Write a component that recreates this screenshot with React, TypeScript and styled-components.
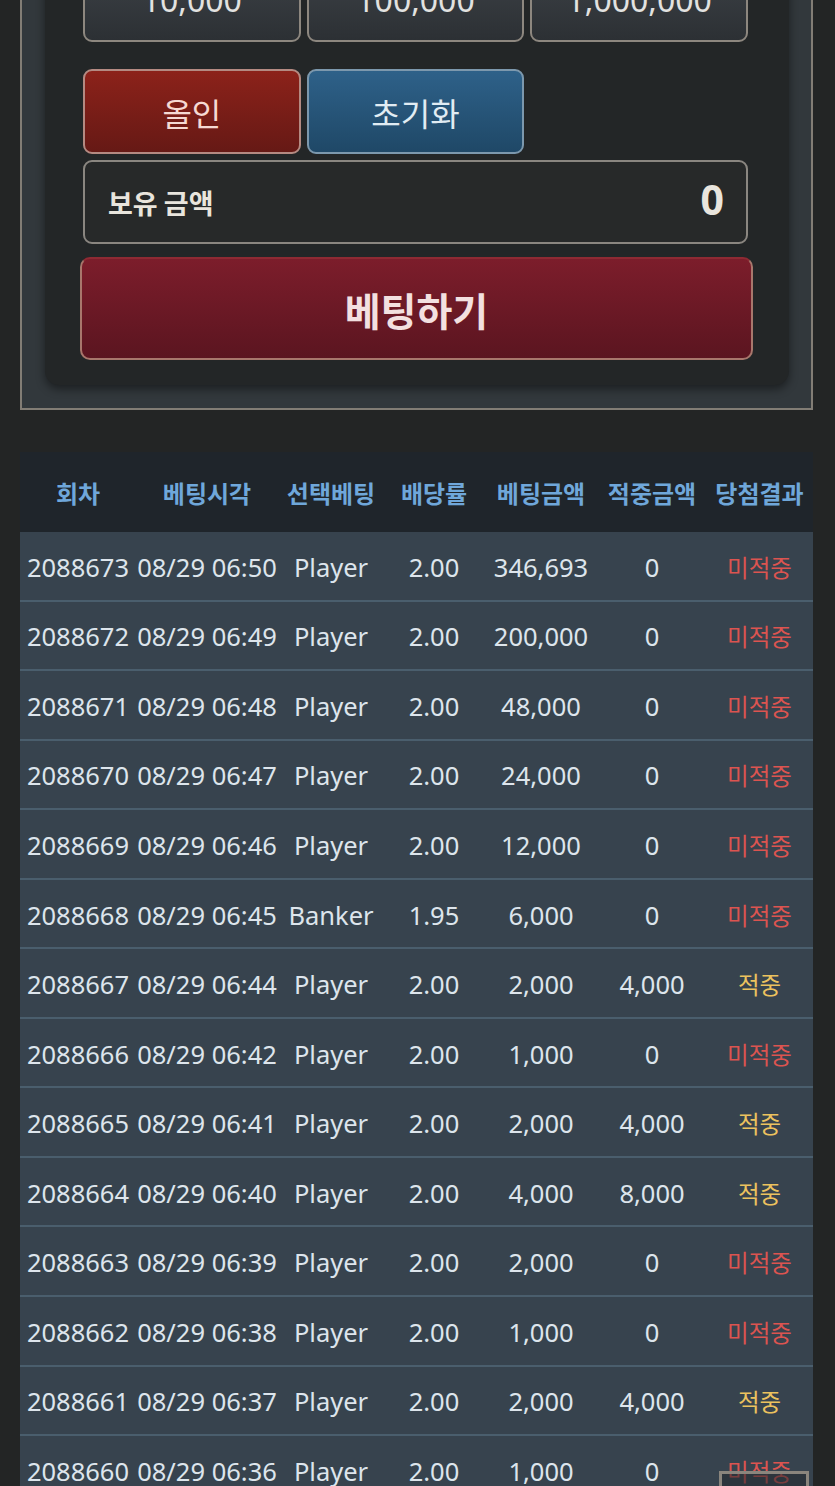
import React from "react";
import styled, { createGlobalStyle } from "styled-components";

const Global = createGlobalStyle`
  html, body { margin: 0; padding: 0; background: #232525; }
  body { font-family: "Noto Sans", "Noto Sans CJK KR", sans-serif; }
  * { box-sizing: border-box; }
`;

const Viewport = styled.div`
  position: relative;
  width: 100%;
  height: 100vh;
  overflow: hidden;
  background: #232525;
`;

const Scroller = styled.div`
  margin-top: -98px;
  padding: 0 22px 0 20px;
`;

const OuterPanel = styled.section`
  border: 2px solid #827d75;
  background: #32383c;
  padding: 23px 22px 23px 23px;
`;

const InnerPanel = styled.div`
  background: #232627;
  border-radius: 14px;
  box-shadow: 0 4px 10px rgba(0, 0, 0, 0.45);
  padding: 30px 41px 25px 38px;
  display: flex;
  flex-direction: column;
`;

const ButtonGrid = styled.div<{ $mt?: number }>`
  display: grid;
  grid-template-columns: repeat(3, 1fr);
  gap: 6px;
  margin-top: ${(p) => p.$mt ?? 0}px;
`;

const variants = {
  gray: { top: "#3e4348", bottom: "#2c3034", border: "#8d877f", color: "#e2e2e0" },
  red: { top: "#8c221a", bottom: "#661915", border: "#b48a82", color: "#f6d9d3" },
  blue: { top: "#2e6189", bottom: "#1f4867", border: "#7c98ad", color: "#e1ecf3" },
};

const ChipButton = styled.button<{ $v: keyof typeof variants }>`
  height: 85px;
  border-radius: 9px;
  border: 2px solid ${(p) => variants[p.$v].border};
  background: linear-gradient(${(p) => variants[p.$v].top}, ${(p) => variants[p.$v].bottom});
  color: ${(p) => variants[p.$v].color};
  font-family: "Noto Sans", "Noto Sans CJK KR", sans-serif;
  font-size: 32px;
  font-weight: 400;
  display: flex;
  align-items: center;
  justify-content: center;
  padding: 0;
`;

const BalanceBox = styled.div`
  margin-top: 6px;
  height: 84px;
  border: 2px solid #8a8680;
  border-radius: 9px;
  background: #272929;
  display: flex;
  align-items: center;
  justify-content: space-between;
  padding: 0 22px 0 23px;
  color: #e9e5dd;
`;

const BalanceLabel = styled.span`
  font-family: "Noto Sans CJK KR", sans-serif;
  font-size: 27px;
  font-weight: 700;
`;

const BalanceValue = styled.span`
  font-family: "Noto Sans", sans-serif;
  font-size: 41px;
  font-weight: 700;
  margin-top: -6px;
`;

const BetButton = styled.button`
  margin: 13px -5px 0 -3px;
  height: 103px;
  border-radius: 10px;
  border: 2px solid #a8776c;
  border-top-color: #8e2a33;
  background: linear-gradient(#7c1d2b, #5b1520);
  color: #f3e0e0;
  font-family: "Noto Sans CJK KR", sans-serif;
  font-size: 39px;
  font-weight: 700;
  display: flex;
  align-items: center;
  justify-content: center;
  padding: 0;
`;

const Table = styled.div`
  margin-top: 42px;
  background: #37424c;
`;

const COLS = "116px 142px 106px 100px 114px 108px 107px";

const HeaderRow = styled.div`
  display: grid;
  grid-template-columns: ${COLS};
  height: 80px;
  align-items: center;
  background: #1f252b;
`;

const HeadCell = styled.div`
  text-align: center;
  font-family: "Noto Sans CJK KR", sans-serif;
  font-size: 24px;
  font-weight: 700;
  color: #6fa7da;
  white-space: nowrap;
`;

const Row = styled.div`
  display: grid;
  grid-template-columns: ${COLS};
  height: 69.55px;
  align-items: center;
  padding-top: 2px;
  border-bottom: 2px solid #4a5e6d;
  background: #37434e;
`;

const Cell = styled.div`
  text-align: center;
  font-family: "Noto Sans", "Noto Sans CJK KR", sans-serif;
  font-size: 25.5px;
  color: #dde5ec;
  white-space: nowrap;
`;

const ResultCell = styled(Cell)<{ $win: boolean }>`
  font-family: "Noto Sans CJK KR", sans-serif;
  font-size: 23.5px;
  color: ${(p) => (p.$win ? "#ecc25e" : "#dc5450")};
`;

const TopButton = styled.div`
  position: absolute;
  left: 719px;
  top: 1471px;
  width: 90px;
  height: 90px;
  border: 3px solid #8a857d;
  background: rgba(36, 41, 47, 0.55);
`;

type Bet = [string, string, string, string, string, string, boolean];

const rows: Bet[] = [
  ["2088673", "08/29 06:50", "Player", "2.00", "346,693", "0", false],
  ["2088672", "08/29 06:49", "Player", "2.00", "200,000", "0", false],
  ["2088671", "08/29 06:48", "Player", "2.00", "48,000", "0", false],
  ["2088670", "08/29 06:47", "Player", "2.00", "24,000", "0", false],
  ["2088669", "08/29 06:46", "Player", "2.00", "12,000", "0", false],
  ["2088668", "08/29 06:45", "Banker", "1.95", "6,000", "0", false],
  ["2088667", "08/29 06:44", "Player", "2.00", "2,000", "4,000", true],
  ["2088666", "08/29 06:42", "Player", "2.00", "1,000", "0", false],
  ["2088665", "08/29 06:41", "Player", "2.00", "2,000", "4,000", true],
  ["2088664", "08/29 06:40", "Player", "2.00", "4,000", "8,000", true],
  ["2088663", "08/29 06:39", "Player", "2.00", "2,000", "0", false],
  ["2088662", "08/29 06:38", "Player", "2.00", "1,000", "0", false],
  ["2088661", "08/29 06:37", "Player", "2.00", "2,000", "4,000", true],
  ["2088660", "08/29 06:36", "Player", "2.00", "1,000", "0", false],
];

const headers = ["회차", "베팅시각", "선택베팅", "배당률", "베팅금액", "적중금액", "당첨결과"];

export default function App() {
  return (
    <Viewport>
      <Global />
      <Scroller>
        <OuterPanel>
          <InnerPanel>
            <ButtonGrid>
              <ChipButton $v="gray">10,000</ChipButton>
              <ChipButton $v="gray">100,000</ChipButton>
              <ChipButton $v="gray">1,000,000</ChipButton>
            </ButtonGrid>
            <ButtonGrid $mt={27}>
              <ChipButton $v="red">올인</ChipButton>
              <ChipButton $v="blue">초기화</ChipButton>
            </ButtonGrid>
            <BalanceBox>
              <BalanceLabel>보유 금액</BalanceLabel>
              <BalanceValue>0</BalanceValue>
            </BalanceBox>
            <BetButton>베팅하기</BetButton>
          </InnerPanel>
        </OuterPanel>
        <Table>
          <HeaderRow>
            {headers.map((h) => (
              <HeadCell key={h}>{h}</HeadCell>
            ))}
          </HeaderRow>
          {rows.map((r) => (
            <Row key={r[0]}>
              <Cell>{r[0]}</Cell>
              <Cell>{r[1]}</Cell>
              <Cell>{r[2]}</Cell>
              <Cell>{r[3]}</Cell>
              <Cell>{r[4]}</Cell>
              <Cell>{r[5]}</Cell>
              <ResultCell $win={r[6]}>{r[6] ? "적중" : "미적중"}</ResultCell>
            </Row>
          ))}
        </Table>
      </Scroller>
      <TopButton />
    </Viewport>
  );
}
